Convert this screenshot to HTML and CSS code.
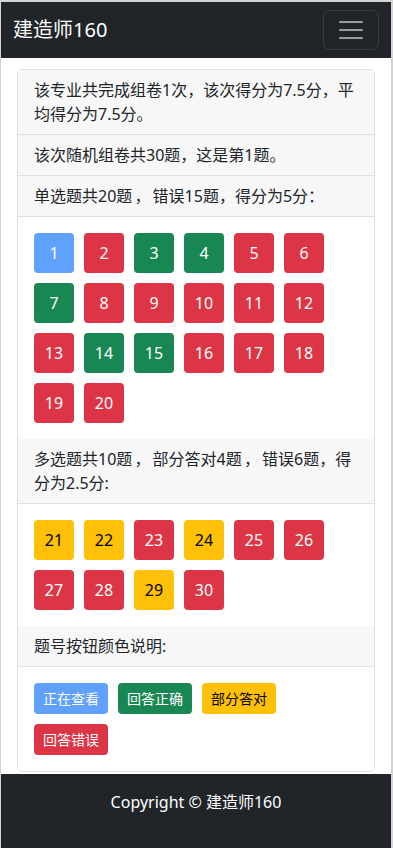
FILE: index.html
```html
<!DOCTYPE html>
<html lang="zh-CN">
<head>
    <meta charset="UTF-8">
    <meta name="viewport" content="width=device-width, initial-scale=1.0">
    <title>建造师160 - 答题</title>
    <link rel="stylesheet" href="styles.css">
</head>
<body>
    <nav class="navbar">
        <a class="navbar-brand" href="#">建造师160</a>
        <button class="navbar-toggler" type="button">
            <svg width="30" height="30" viewBox="0 0 30 30">
                <path d="M4 7h22M4 15h22M4 23h22" stroke="rgba(255,255,255,0.55)" stroke-width="2" stroke-linecap="round" stroke-miterlimit="10"/>
            </svg>
        </button>
    </nav>

    <div class="container">
        <div class="card">
            <div class="card-header">该专业共完成组卷1次，该次得分为7.5分，平均得分为7.5分。</div>
            <div class="card-header">该次随机组卷共30题，这是第1题。</div>
            <div class="card-header tight">单选题共20题 ， 错误15题，得分为5分：</div>
            <div class="card-body">
                <div class="btn-grid" id="singleGrid"></div>
            </div>

            <div class="card-header tight">多选题共10题 ， 部分答对4题 ， 错误6题，得分为2.5分:</div>
            <div class="card-body">
                <div class="btn-grid" id="multiGrid"></div>
            </div>

            <div class="card-header">题号按钮颜色说明:</div>
            <div class="card-body">
                <div class="legend">
                    <span class="btn btn-sm btn-view">正在查看</span>
                    <span class="btn btn-sm btn-right">回答正确</span>
                    <span class="btn btn-sm btn-part">部分答对</span>
                    <span class="btn btn-sm btn-wrong">回答错误</span>
                </div>
            </div>
        </div>
    </div>

    <footer class="footer">Copyright © 建造师160</footer>

    <script>
        // 题号状态: v 正在查看, r 正确, p 部分答对, w 错误
        const single = "vwrrwwrwwwwwwrrwwwww";
        const multi = "ppwpwwwwpw";
        const cls = { v: "btn-view", r: "btn-right", p: "btn-part", w: "btn-wrong" };

        function fill(gridId, states, start) {
            const grid = document.getElementById(gridId);
            states.split("").forEach((s, i) => {
                const a = document.createElement("a");
                a.href = "#";
                a.className = "btn btn-num " + cls[s];
                a.textContent = start + i;
                grid.appendChild(a);
            });
        }

        fill("singleGrid", single, 1);
        fill("multiGrid", multi, 21);
    </script>
</body>
</html>
```

FILE: styles.css
```css
:root {
    --dark: #212529;
    --blue: #61a1fe;
    --green: #198754;
    --red: #dc3545;
    --yellow: #ffc107;
    --line: #dfdfdf;
}

* {
    box-sizing: border-box;
    margin: 0;
    padding: 0;
}

html {
    border-top: 2px solid #d4d4d4;
    border-left: 1px solid #d4d4d4;
    border-right: 2px solid #d4d4d4;
}

body {
    font-family: "Noto Sans", "Noto Sans CJK SC", sans-serif;
    font-size: 16px;
    line-height: 1.5;
    color: var(--dark);
    background: white;
    min-height: 846px;
    display: flex;
    flex-direction: column;
}

.navbar {
    background: var(--dark);
    display: flex;
    align-items: center;
    justify-content: space-between;
    padding: 8px 12px;
    height: 56px;
}

.navbar-brand {
    color: white;
    text-decoration: none;
    font-size: 20px;
    line-height: 30px;
}

.navbar-toggler {
    width: 56px;
    height: 40px;
    display: flex;
    align-items: center;
    justify-content: center;
    background: transparent;
    border: 1px solid rgba(255,255,255,0.1);
    border-radius: 6px;
}

.container {
    padding: 11px 16px 2px;
}

.card {
    border: 1px solid var(--line);
    border-radius: 5px;
    overflow: hidden;
}

.card-header {
    background: #f7f7f7;
    padding: 8px 16px;
    border-bottom: 1px solid var(--line);
}

/* 逗号两边有空格，压一下间距让换行位置一致 */
.card-header.tight {
    word-spacing: -2px;
}

.card-body {
    padding: 16px;
}

.btn-grid,
.legend {
    display: flex;
    flex-wrap: wrap;
    gap: 10px;
}

.btn {
    display: inline-flex;
    align-items: center;
    justify-content: center;
    color: white;
    text-decoration: none;
    border-radius: 4px;
}

.btn-num {
    width: 40px;
    height: 40px;
    font-size: 16px;
}

.btn-sm {
    width: 74px;
    height: 31px;
    font-size: 14px;
}

.btn-view { background: var(--blue); }
.btn-right { background: var(--green); }
.btn-wrong { background: var(--red); }
.btn-part {
    background: var(--yellow);
    color: black;
}

.footer {
    flex: 1;
    background: var(--dark);
    color: white;
    text-align: center;
    padding-top: 16px;
}
```
